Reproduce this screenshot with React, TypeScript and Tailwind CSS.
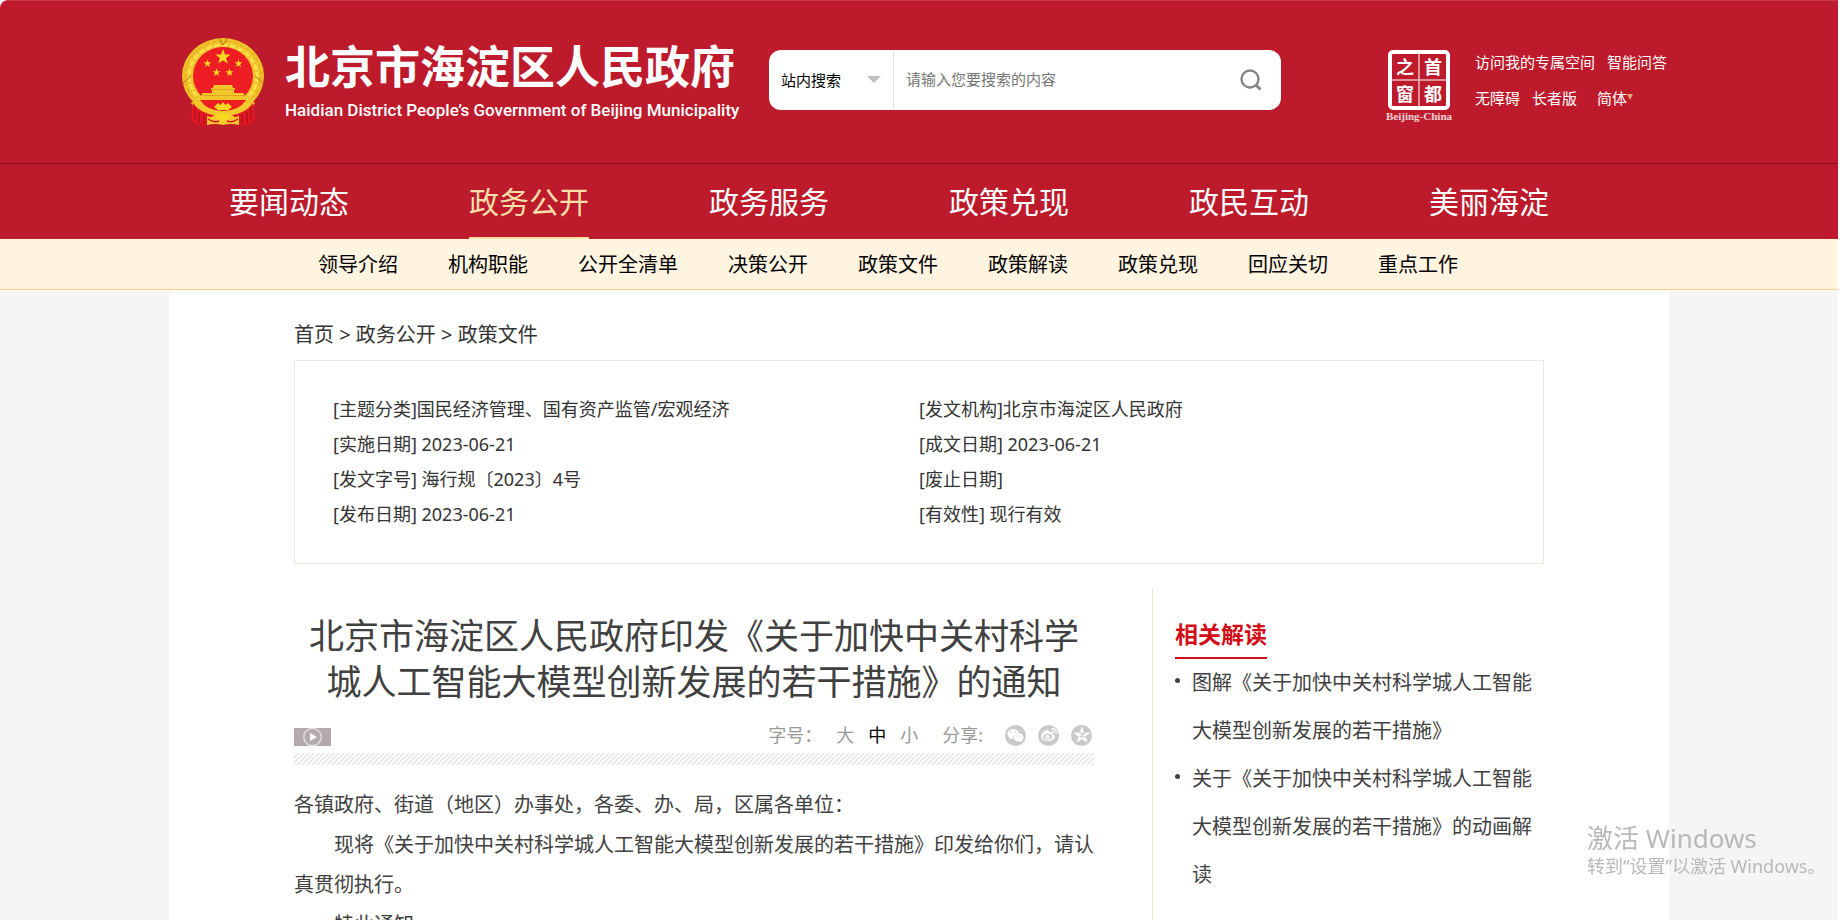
import React, { useState } from 'react';
import { FaWeibo, FaWeixin } from 'react-icons/fa';

interface MetaItem {
  label: string;
  value: string;
}

const navItems = ['要闻动态', '政务公开', '政务服务', '政策兑现', '政民互动', '美丽海淀'];

const subNavItems = [
  '领导介绍',
  '机构职能',
  '公开全清单',
  '决策公开',
  '政策文件',
  '政策解读',
  '政策兑现',
  '回应关切',
  '重点工作',
];

const metaItems: MetaItem[] = [
  { label: '[主题分类]', value: '国民经济管理、国有资产监管/宏观经济' },
  { label: '[发文机构]', value: '北京市海淀区人民政府' },
  { label: '[实施日期]', value: ' 2023-06-21' },
  { label: '[成文日期]', value: ' 2023-06-21' },
  { label: '[发文字号]', value: ' 海行规〔2023〕4号' },
  { label: '[废止日期]', value: '' },
  { label: '[发布日期]', value: ' 2023-06-21' },
  { label: '[有效性]', value: ' 现行有效' },
];

const relatedItems = [
  '图解《关于加快中关村科学城人工智能大模型创新发展的若干措施》',
  '关于《关于加快中关村科学城人工智能大模型创新发展的若干措施》的动画解读',
];

const STAR = 'M0-10 2.4-3.1 9.5-3.1 3.8 1.2 5.9 8.1 0 4 -5.9 8.1 -3.8 1.2 -9.5-3.1 -2.4-3.1Z';

const Emblem = () => (
  <svg viewBox="0 0 84 88" className="w-[84px] h-[88px] shrink-0" aria-hidden="true">
    <ellipse cx="42" cy="38" rx="41" ry="38" fill="#f0c229" />
    <ellipse cx="42" cy="38" rx="38" ry="35" fill="none" stroke="#d9a51c" strokeWidth="1" strokeDasharray="4 3" />
    <ellipse cx="42" cy="38" rx="34" ry="31" fill="none" stroke="#fbe04a" strokeWidth="3" strokeDasharray="6 2" />
    <path d="M2 45 10 38M82 45 74 38M38 1 42 7 46 1" fill="none" stroke="#a8720f" strokeWidth="1" />
    <ellipse cx="42" cy="38" rx="30" ry="29" fill="#ee1c23" />
    {/* wheat stalks meeting at the gear */}
    <path d="M14 62h56l4 3q-10 17-32 17T10 65z" fill="#f3c62b" />
    <path d="M19 62h46q-7 11-23 11T19 62z" fill="#ee1c23" />
    <g fill="#fbd91f">
      <path d={STAR} transform="translate(42 19) scale(.8)" />
      <path d={STAR} transform="translate(26.5 25.5) scale(.42)" />
      <path d={STAR} transform="translate(57.5 25.5) scale(.42)" />
      <path d={STAR} transform="translate(35.5 34.5) scale(.42)" />
      <path d={STAR} transform="translate(48.5 34.5) scale(.42)" />
    </g>
    {/* gate tower */}
    <path d="M33 47h18l1 3h2v2h-1v3H31v-3h-1v-2h2z" fill="#f3c62b" />
    <path d="M21 55h42v2h3v5H18v-5h3z" fill="#f3c62b" />
    <path d="M31 51.500h22M19 57.500h46" stroke="#c98f14" strokeWidth=".6" />
    <path d="M33 69 37 65 39.500 67 42 64 44.500 67 47 65 51 69 47 72H37z" fill="#fbd91f" />
    {/* red drapery */}
    <path d="M12 65q7 10 21 12l-5 4v6H16l-6-5z" fill="#e01824" />
    <path d="M72 65q-7 10-21 12l5 4v6h12l6-5z" fill="#e01824" />
    <path d="M14 70v12M18 74v12M23 77v9M70 70v12M66 74v12M61 77v9" stroke="#980b18" strokeWidth=".8" />
    <path d="M26 78q8 3 16 3t16-3v9q-8-2-16 0-8-2-16 0z" fill="#f3c62b" />
    <path d="M27 81q6 4 11 2M57 81q-6 4-11 2" fill="none" stroke="#d81320" strokeWidth="1.500" />
    <path d="M35 80 37 75 39.500 77 42 74 44.500 77 47 75 49 80 42 83z" fill="#fbd91f" />
  </svg>
);

const CapitalWindow = () => (
  <a href="#" aria-label="首都之窗" className="w-[68px] text-center">
    <svg viewBox="0 0 62 60" className="w-[62px] h-[60px] mx-auto" aria-hidden="true">
      <rect x="2" y="2" width="58" height="56" rx="3" fill="none" stroke="#fff" strokeWidth="4" />
      <path d="M31 4v52M4 30h54" stroke="#fff" strokeOpacity=".7" strokeWidth="1.500" />
      <g
        fill="#fff"
        fontFamily="'Noto Sans CJK SC', sans-serif"
        fontSize="18"
        fontWeight="700"
        textAnchor="middle"
      >
        <text x="17" y="24">之</text>
        <text x="45" y="24">首</text>
        <text x="17" y="51">窗</text>
        <text x="45" y="51">都</text>
      </g>
    </svg>
    <span className="block font-['Liberation_Serif',serif] font-bold text-[11px] leading-3 text-white/80">
      Beijing-China
    </span>
  </a>
);

const QzoneIcon = () => (
  <svg viewBox="0 0 20 20" className="w-4 h-4" aria-hidden="true">
    <path d={STAR} transform="translate(10 10.500)" fill="#fff" stroke="#fff" strokeLinejoin="round" />
    <path d="M7 8q3-1 6 0l-5 4q3 1 6 0" fill="none" stroke="#c9c9c9" strokeWidth="1.400" />
  </svg>
);

const Header = () => (
  <header className="bg-[#bd1a2c] rounded-tl-lg border-t border-[#c4384a]">
    <div className="w-[1500px] max-w-full mx-auto h-[162px] flex pt-[37px]">
      <a href="#" className="flex pl-3 w-[600px]">
        <Emblem />
        <span className="pl-5 text-white">
          <span className="block text-[45px] leading-[58px] font-bold whitespace-nowrap">北京市海淀区人民政府</span>
          <span className="block mt-1 font-['Roboto',sans-serif] font-medium text-[17px] leading-5 whitespace-nowrap">
            Haidian District People’s Government of Beijing Municipality
          </span>
        </span>
      </a>
      <form className="mt-3 flex w-[512px] h-[60px] bg-white rounded-xl overflow-hidden text-[15px]">
        <div className="relative w-[125px] border-r border-[#e0e0e0]">
          <select
            aria-label="搜索范围"
            className="appearance-none w-full h-full pl-3 bg-transparent text-black outline-none"
          >
            <option>站内搜索</option>
          </select>
          <span className="pointer-events-none absolute right-3 top-[26px] border-x-[7px] border-x-transparent border-t-[7px] border-t-[#bfbfbf]" />
        </div>
        <input
          type="text"
          aria-label="搜索内容"
          placeholder="请输入您要搜索的内容"
          className="flex-1 min-w-0 px-3 pb-0.5 placeholder:text-[#757575] outline-none"
        />
        <button type="button" aria-label="搜索" className="w-[60px] flex items-center justify-center">
          <svg viewBox="0 0 22 22" className="w-[22px] h-[22px]" fill="none" stroke="#858585" strokeWidth="2.400">
            <circle cx="10" cy="10" r="8.500" />
            <path d="m16 16 4.500 4.500" strokeWidth="3" />
          </svg>
        </button>
      </form>
      <div className="ml-auto mt-3 flex">
        <CapitalWindow />
        <div className="ml-[22px] w-[194px] text-[15px] text-white">
          <div className="flex gap-3 leading-6">
            <a href="#">访问我的专属空间</a>
            <a href="#">智能问答</a>
          </div>
          <div className="flex gap-3 mt-3 leading-6">
            <a href="#">无障碍</a>
            <a href="#">长者版</a>
            <a href="#" className="pl-2 flex">
              简体
              <span className="mt-2 h-0 border-x-[3px] border-x-transparent border-t-[6px] border-t-[#dba974]" />
            </a>
          </div>
        </div>
      </div>
    </div>
    <nav className="border-t border-[#8f0f20]">
      <ul className="w-[1500px] max-w-full mx-auto flex text-[30px] leading-[71px]">
        {navItems.map((item) => (
          <li key={item} className="w-60 flex justify-center">
            <a
              href="#"
              className={
                item === '政务公开'
                  ? 'pt-0.5 text-[#ffdfa8] border-b-2 border-[#ffdfa8]'
                  : 'pt-0.5 text-white border-b-2 border-transparent'
              }
            >
              {item}
            </a>
          </li>
        ))}
      </ul>
    </nav>
  </header>
);

const SubNav = () => (
  <nav className="bg-[#fef4e0] border-b border-[#f8d08a]">
    <ul className="w-[1500px] max-w-full mx-auto pl-[149px] pt-0.5 flex gap-[50px] text-xl leading-[48px] text-black">
      {subNavItems.map((item) => (
        <li key={item}>
          <a href="#">{item}</a>
        </li>
      ))}
    </ul>
  </nav>
);

const sizes = ['大', '中', '小'];

const Article = () => {
  const [size, setSize] = useState('中');

  return (
    <article className="w-[800px] shrink-0 pt-[25px]">
      <h1 className="text-[35px] leading-[46px] text-center text-[#404040]">
        北京市海淀区人民政府印发《关于加快中关村科学城人工智能大模型创新发展的若干措施》的通知
      </h1>
      <div className="mt-[14px] flex items-center h-8 text-lg text-[#999]">
        <button type="button" aria-label="播放" className="mt-1">
          <svg viewBox="0 0 37 18" className="w-[37px] h-[18px]">
            <rect width="37" height="18" fill="#b3aaab" />
            <circle cx="18.500" cy="9" r="8.700" fill="none" stroke="#e9e5e5" strokeWidth="1.200" />
            <path d="M16 5v8l7-4z" fill="#fff" />
          </svg>
        </button>
        <span className="ml-auto">字号：</span>
        <div className="flex gap-[14px] ml-[14px]">
          {sizes.map((s) => (
            <button
              key={s}
              type="button"
              onClick={() => setSize(s)}
              className={s === size ? 'text-black' : 'text-[#999]'}
            >
              {s}
            </button>
          ))}
        </div>
        <span className="ml-6">分享:</span>
        <div className="flex gap-3 ml-[22px] mr-0.5 text-white">
          <a href="#" aria-label="微信" className="w-[21px] h-[21px] rounded-full bg-[#c9c9c9] flex items-center justify-center">
            <FaWeixin className="w-[17px] h-[17px]" />
          </a>
          <a href="#" aria-label="微博" className="w-[21px] h-[21px] rounded-full bg-[#c9c9c9] flex items-center justify-center">
            <FaWeibo className="w-4 h-4" />
          </a>
          <a href="#" aria-label="QQ空间" className="w-[21px] h-[21px] rounded-full bg-[#c9c9c9] flex items-center justify-center">
            <QzoneIcon />
          </a>
        </div>
      </div>
      <svg className="mt-0.5 block w-full h-3" aria-hidden="true">
        <defs>
          <pattern id="hatch" width="5" height="5" patternUnits="userSpaceOnUse">
            <path d="M-1 1 1-1M0 5 5 0M4 6 6 4" stroke="#e4e4e4" strokeWidth="1.500" />
          </pattern>
        </defs>
        <rect width="100%" height="100%" fill="url(#hatch)" />
      </svg>
      <div className="mt-5 text-xl leading-10 text-[#404040]">
        <p>各镇政府、街道（地区）办事处，各委、办、局，区属各单位：</p>
        <p className="indent-10">
          现将《关于加快中关村科学城人工智能大模型创新发展的若干措施》印发给你们，请认真贯彻执行。
        </p>
        <p className="indent-10">特此通知。</p>
      </div>
    </article>
  );
};

const App: React.FC = () => {
  return (
    <div className="h-screen overflow-hidden bg-white pr-[5px] font-['Noto_Sans','Noto_Sans_CJK_SC',sans-serif]">
      <Header />
      <SubNav />
      <main className="bg-[#f5f5f5] pt-px">
        <div className="w-[1500px] max-w-full mx-auto bg-white px-[125px] min-h-screen">
          <div className="pt-6 text-xl leading-10 text-[#333]">
            <a href="#">首页</a> &gt; <a href="#">政务公开</a> &gt; <a href="#">政策文件</a>
          </div>
          <ul className="mt-[5px] border border-[#e9e9e0] py-[31px] px-[38px] grid grid-cols-2 text-lg leading-[35px] text-[#333]">
            {metaItems.map((item) => (
              <li key={item.label} className="whitespace-pre">
                {item.label}
                {item.value}
              </li>
            ))}
          </ul>
          <div className="mt-6 flex">
            <Article />
            <aside className="ml-[58px] flex-1 min-h-screen border-l border-[#e9e9e0] pl-[22px] pt-6">
              <h2 className="w-fit text-[23px] leading-[44px] pb-px font-bold text-[#d20d17] border-b-2 border-[#d20d17]">
                相关解读
              </h2>
              <ul className="text-xl leading-[48px] text-[#404040]">
                {relatedItems.map((item) => (
                  <li key={item} className="flex">
                    <span className="mt-[19px] w-[5px] h-[5px] shrink-0 rounded-full bg-[#404040]" />
                    <a href="#" className="ml-3">
                      {item}
                    </a>
                  </li>
                ))}
              </ul>
            </aside>
          </div>
        </div>
      </main>
      <div className="pointer-events-none fixed right-[24px] bottom-11 w-[232px] whitespace-nowrap text-[#b8b8b8]">
        <div className="text-[26px] leading-9">激活 Windows</div>
        <div className="text-lg leading-5">转到“设置”以激活 Windows。</div>
      </div>
    </div>
  );
};

export default App;
